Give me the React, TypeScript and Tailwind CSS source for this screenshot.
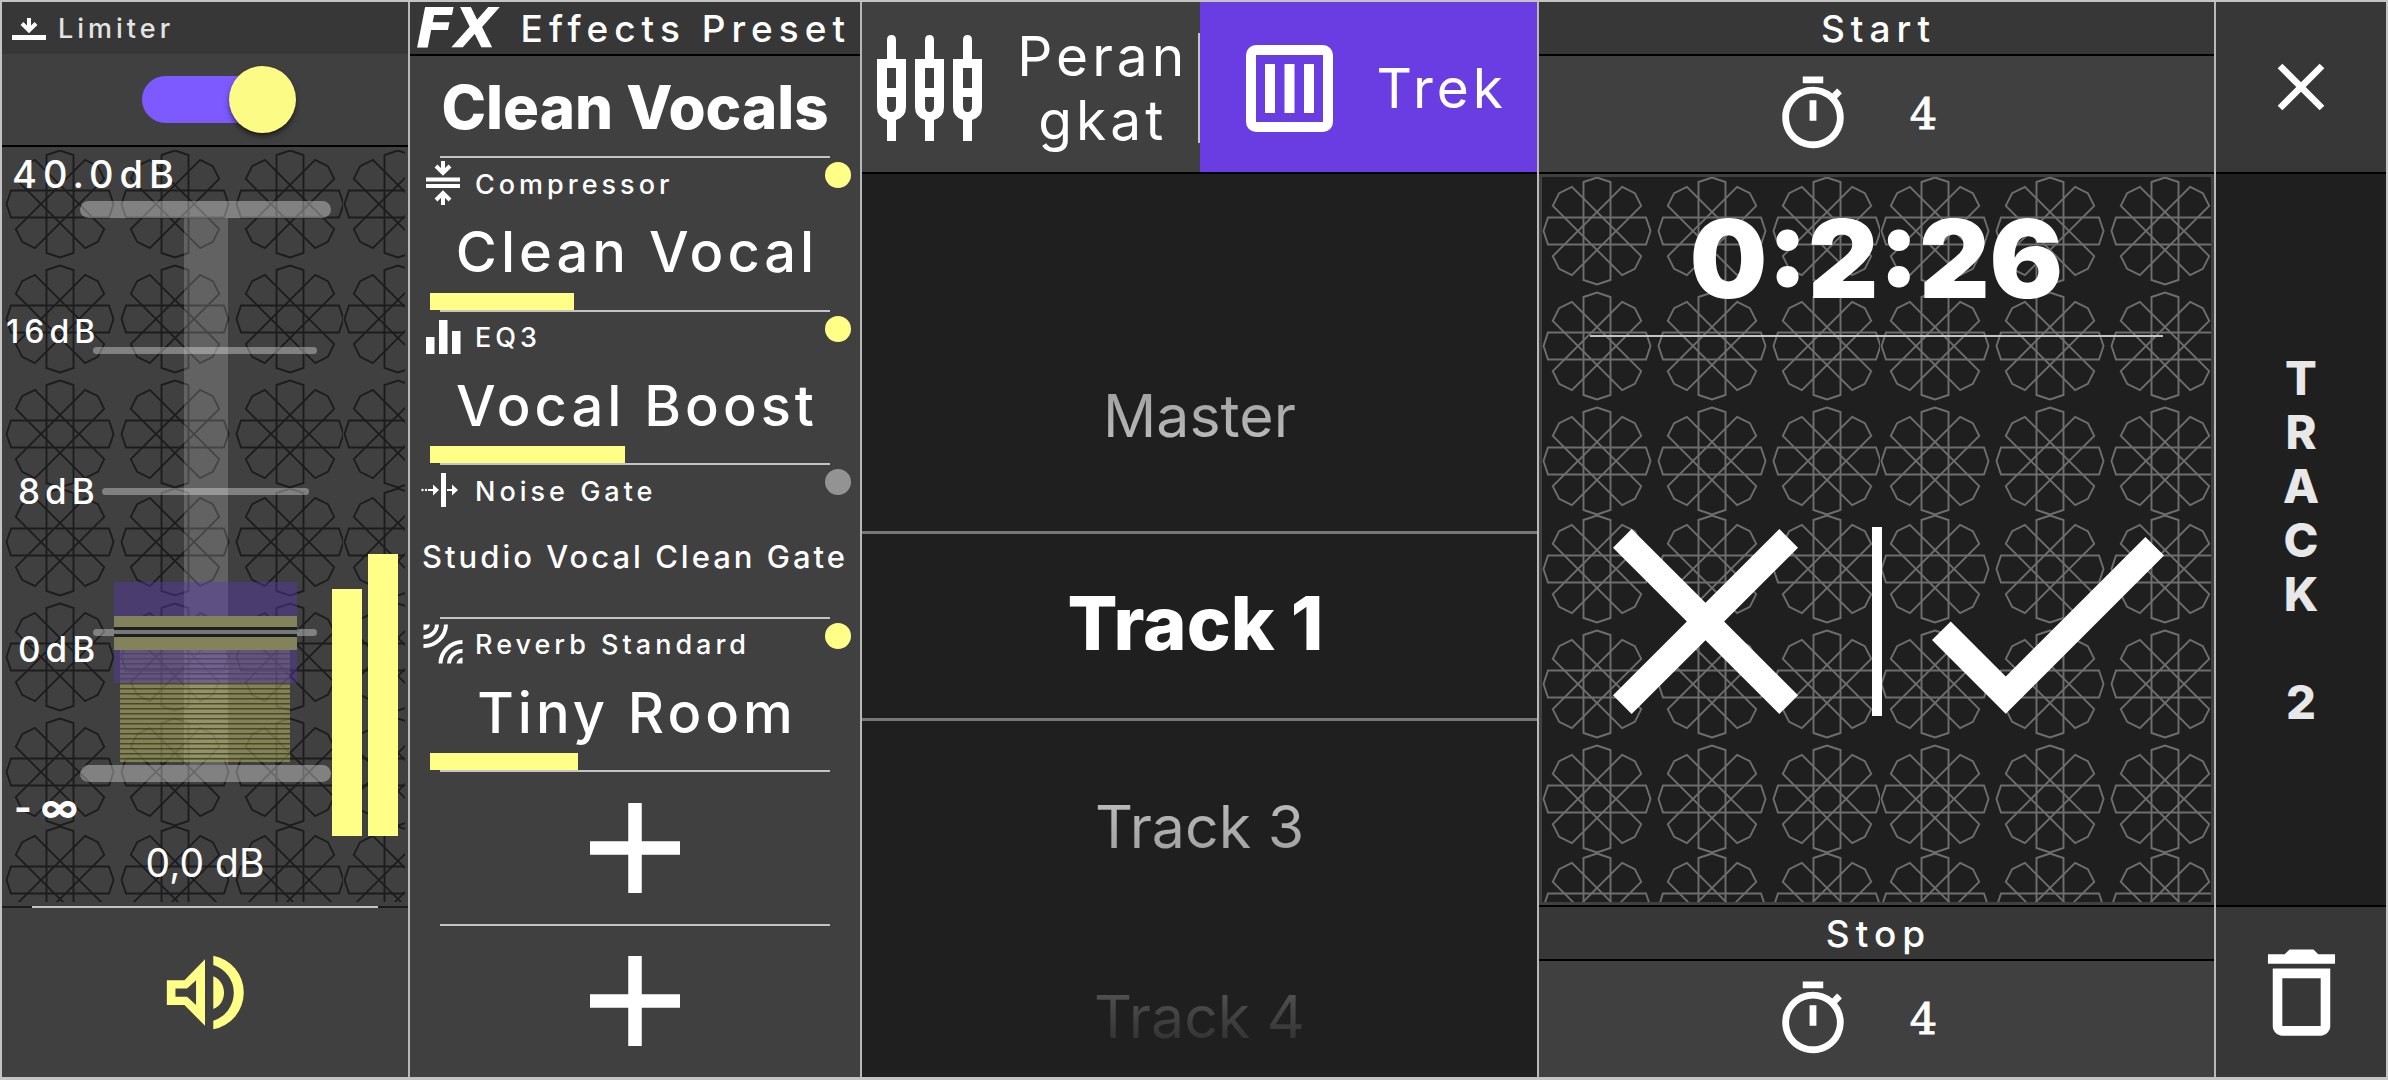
import { useState } from "react";
import type { ReactNode } from "react";
import { MdCheck, MdClose, MdDeleteOutline, MdOutlineTimer } from "react-icons/md";

const STAR_OFFSETS = [57, 172, 287];
const PETAL = "M-13.5 -49 L0 -53.5 L13.5 -49 V49 L0 53.5 L-13.5 49 Z";

/** Tiled backdrop of eight-petalled outline stars. */
function StarPattern({ id, color }: { id: string; color: string }) {
  return (
    <svg className="absolute inset-0 h-full w-full" aria-hidden="true">
      <defs>
        <g id={`${id}-star`} fill="none" stroke={color} strokeWidth="1.9">
          <path d={PETAL} />
          <path d={PETAL} transform="rotate(45)" />
          <path d={PETAL} transform="rotate(90)" />
          <path d={PETAL} transform="rotate(135)" />
        </g>
        <pattern id={id} width="338" height="338" patternUnits="userSpaceOnUse">
          {STAR_OFFSETS.map((x) =>
            STAR_OFFSETS.map((y) => (
              <use key={`${x}-${y}`} href={`#${id}-star`} x={x - 2} y={y - 3} />
            )),
          )}
        </pattern>
      </defs>
      <rect width="100%" height="100%" fill={`url(#${id})`} />
    </svg>
  );
}

function LimiterIcon() {
  return (
    <svg className="h-[22px] w-[34px]" viewBox="0 0 34 22" aria-hidden="true">
      <rect y="17" width="34" height="5" fill="#fff" />
      <path d="M17 0 V12 M10 5.5 L17 12.5 L24 5.5" stroke="#fff" strokeWidth="4" fill="none" />
    </svg>
  );
}

function CompressorIcon() {
  return (
    <svg className="h-[46px] w-[46px]" viewBox="0 0 46 46" aria-hidden="true">
      <path d="M6 19.5 H40 M6 26 H40" stroke="#fff" strokeWidth="4" />
      <path d="M23 1 V12 M16 6 L23 13 L30 6 M23 45 V34 M16 40 L23 33 L30 40" stroke="#fff" strokeWidth="4" fill="none" />
    </svg>
  );
}

function EqIcon() {
  return (
    <svg className="h-[46px] w-[46px]" viewBox="0 0 46 46" fill="#fff" aria-hidden="true">
      <rect x="6" y="23" width="8.500" height="17" />
      <rect x="19" y="6" width="8.500" height="34" />
      <rect x="32" y="17" width="8.500" height="23" />
    </svg>
  );
}

function GateIcon() {
  return (
    <svg className="h-[46px] w-[46px]" viewBox="0 0 46 46" fill="#fff" aria-hidden="true">
      <rect x="21" y="6" width="5" height="34" />
      <path d="M8 22 H13 V17.500 L19 23 L13 28.500 V24 H8 Z" />
      <path d="M27 22 H32 V17.500 L38 23 L32 28.500 V24 H27 Z" />
      <circle cx="2.500" cy="23" r="1.200" />
      <circle cx="6" cy="23" r="1.200" />
    </svg>
  );
}

function ReverbIcon() {
  return (
    <svg className="h-[46px] w-[46px]" viewBox="0 0 46 46" aria-hidden="true">
      <g fill="none" stroke="#fff" strokeWidth="4">
        <path d="M17 3.500 A13 13 0 0 1 3.500 16" />
        <path d="M26 3.500 A22 22 0 0 1 3.500 25" />
        <path d="M29 42.500 A13 13 0 0 1 42.500 30" />
        <path d="M20.500 42.500 A22 22 0 0 1 42.500 21" />
      </g>
      <path d="M3.500 3.500 H10 A6.500 6.500 0 0 1 3.500 9 Z M42.500 42.500 H36.500 A6.500 6.500 0 0 1 42.500 36.500 Z" fill="#fff" />
    </svg>
  );
}

function SpeakerIcon() {
  return (
    <svg className="h-[75px] w-[78px]" viewBox="500 704 234 226" fill="#ffff88" aria-hidden="true">
      <path fillRule="evenodd" d="M502 780 H555 L617 717 V917 L555 855 H502 Z M528 805 V830 H563 L590 855 V780 L563 805 Z" />
      <path d="M642 768 C685 785 685 850 642 867 Z" />
      <path d="M642 706 A113 113 0 0 1 642 928 V902 A88 88 0 0 0 642 734 Z" />
    </svg>
  );
}

function DevicesIcon() {
  return (
    <svg className="h-[106px] w-[108px] shrink-0" viewBox="0 0 108 106" aria-hidden="true">
      {[1, 39, 77].map((x) => (
        <g key={x} transform={`translate(${x} 0)`} fill="#fff">
          <path d="M10 24 V5 Q10 0 14.500 0 Q19 0 19 5 V24 Z" />
          <path
            fillRule="evenodd"
            d="M0 24 H29 V72 Q29 82 19 85 V106 H10 V85 Q0 82 0 72 Z M10 33 V53 H19 V33 Z M10 62 V71 Q10 77 14.500 77 Q19 77 19 71 V62 Z"
          />
        </g>
      ))}
    </svg>
  );
}

function TracksIcon() {
  return (
    <svg className="h-[87px] w-[87px] shrink-0" viewBox="0 0 87 87" aria-hidden="true">
      <rect x="5" y="5" width="77" height="77" rx="5" fill="none" stroke="#fff" strokeWidth="10" />
      <path d="M24 19 V68 M43.500 19 V68 M63 19 V68" stroke="#fff" strokeWidth="10" />
    </svg>
  );
}

function Line() {
  return <div className="h-[2px] shrink-0 bg-black" />;
}

function PanelHeader({ children }: { children: ReactNode }) {
  return <header className="flex h-[52px] shrink-0 items-center justify-center bg-[#373737] pt-[2px]">{children}</header>;
}

const SCALE = [
  { text: "40.0dB", className: "pl-[10px] text-[38px] tracking-[6px]" },
  { text: "16dB", className: "pl-1 text-[32px] tracking-[5px]" },
  { text: "8dB", className: "pl-4 text-[35px] tracking-[5px]" },
  { text: "0dB", className: "pl-4 text-[35px] tracking-[5px]" },
  { text: "- ∞", className: "pl-3 text-[38px] font-bold" },
];

/** Rails, ticks, handle and level meters of the gain fader. */
function Fader() {
  const stripes = Array.from({ length: 22 }, (_, i) => 506 + i * 5);
  return (
    <svg className="absolute inset-0 h-full w-full" viewBox="0 0 406 759" aria-hidden="true">
      <g fill="#fff">
        <rect x="182" y="71" width="44" height="547" fillOpacity="0.18" />
        <rect x="78" y="54" width="251" height="17" rx="8.500" fillOpacity="0.34" />
        <rect x="91" y="200" width="224" height="7" rx="3.500" fillOpacity="0.34" />
        <rect x="100" y="341" width="207" height="7" rx="3.500" fillOpacity="0.34" />
        <rect x="91" y="482" width="224" height="7" rx="3.500" fillOpacity="0.34" />
        <rect x="78" y="618" width="251" height="17" rx="8.500" fillOpacity="0.34" />
      </g>
      <rect x="112" y="435" width="183" height="101" fill="#5838b0" fillOpacity="0.42" />
      <rect x="118" y="503" width="170" height="33" fill="#a090a0" fillOpacity="0.3" />
      <rect x="118" y="536" width="170" height="79" fill="#c4c46c" fillOpacity="0.5" />
      <rect x="112" y="469" width="183" height="34" fill="#82835a" />
      <rect x="112" y="480" width="183" height="3" fill="#1f1f1f" />
      <rect x="112" y="483" width="183" height="4" fill="#777" />
      <rect x="112" y="487" width="183" height="3" fill="#1f1f1f" />
      {stripes.map((y) => (
        <rect
          key={y}
          x="118"
          y={y}
          width="170"
          height="1.500"
          fill={y < 536 ? "#4c3f60" : "#303018"}
          fillOpacity={y < 536 ? 0.8 : 0.7}
        />
      ))}
      <rect x="330" y="442" width="30" height="247" fill="#ffff88" />
      <rect x="366" y="407" width="30" height="282" fill="#ffff88" />
    </svg>
  );
}

function LimiterPanel() {
  const [on, setOn] = useState(true);
  return (
    <section className="flex min-w-0 flex-col bg-[#404040]">
      <header className="flex h-[52px] shrink-0 items-center gap-3 bg-[#373737] pt-[2px] pl-[10px]">
        <LimiterIcon />
        <h2 className="text-[27px] font-medium tracking-[4px] text-[#e4e4e4]">Limiter</h2>
      </header>
      <div className="flex h-[91px] shrink-0 items-center justify-center pl-7">
        <label className="relative flex h-[67px] w-[154px] cursor-pointer items-center">
          <input
            type="checkbox"
            role="switch"
            aria-label="Limiter"
            checked={on}
            onChange={() => setOn(!on)}
            className="peer sr-only"
          />
          <span className="h-[47px] w-[144px] rounded-full bg-[#757575] peer-checked:bg-[#7c5aff]" />
          <span className="absolute left-0 h-[67px] w-[67px] rounded-full bg-[#fbfb86] shadow-md shadow-black/50 peer-checked:left-auto peer-checked:right-0" />
        </label>
      </div>
      <Line />
      <div className="relative flex min-h-0 flex-1 flex-col">
        <div className="absolute inset-x-[3px] top-[3px] bottom-1 overflow-hidden">
          <StarPattern id="limiter-stars" color="#1c1c1c" />
        </div>
        <Fader />
        <div className="relative flex flex-1 flex-col justify-between pt-[7px] pb-1 font-medium whitespace-pre">
          {SCALE.map((s) => (
            <span key={s.text} className={`${s.className} leading-[40px]`}>
              {s.text}
            </span>
          ))}
        </div>
        <output className="relative flex h-[75px] shrink-0 items-center justify-center pb-[10px] text-[39px]">0,0 dB</output>
      </div>
      <div className="h-[2px] shrink-0 bg-[#1c1c1c] px-[30px]">
        <div className="h-full bg-[#c4c4c4]" />
      </div>
      <button type="button" aria-label="Mute" className="flex h-[169px] shrink-0 items-center justify-center">
        <SpeakerIcon />
      </button>
    </section>
  );
}

type Effect = { name: string; preset: string; level: number; on: boolean; small?: boolean; icon: ReactNode };

const EFFECTS: Effect[] = [
  { name: "Compressor", preset: "Clean Vocal", level: 37, on: true, icon: <CompressorIcon /> },
  { name: "EQ3", preset: "Vocal Boost", level: 50, on: true, icon: <EqIcon /> },
  { name: "Noise Gate", preset: "Studio Vocal Clean Gate", level: 0, on: false, small: true, icon: <GateIcon /> },
  { name: "Reverb Standard", preset: "Tiny Room", level: 38, on: true, icon: <ReverbIcon /> },
];

function EffectSlot({ effect }: { effect: Effect }) {
  const [on, setOn] = useState(effect.on);
  return (
    <div className="flex min-h-0 flex-1 flex-col">
      <div className="mx-[30px] h-[2px] shrink-0 bg-[#c4c4c4]" />
      <div className="flex h-[50px] shrink-0 items-center gap-[9px] pr-[9px] pl-[10px]">
        {effect.icon}
        <h3 className="flex-1 pt-1 text-[27px] font-medium tracking-[4px]">{effect.name}</h3>
        <button
          type="button"
          aria-label={`Toggle ${effect.name}`}
          aria-pressed={on}
          onClick={() => setOn(!on)}
          className={`mt-1 h-[26px] w-[26px] self-start rounded-full ${on ? "bg-[#ffff88]" : "bg-[#939393]"}`}
        />
      </div>
      <button
        type="button"
        className={`flex flex-1 items-center justify-center whitespace-nowrap font-medium ${
          effect.small ? "text-[31px] tracking-[3px]" : "pt-1 pl-1 text-[56px] leading-none tracking-[4px]"
        }`}
      >
        {effect.preset}
      </button>
      <div className="ml-5 h-[17px] w-[390px] shrink-0">
        <div className="h-full bg-[#ffff88]" style={{ width: `${effect.level}%` }} />
      </div>
    </div>
  );
}

function EmptySlot() {
  return (
    <div className="flex min-h-0 flex-1 flex-col">
      <div className="mx-[30px] h-[2px] shrink-0 bg-[#c4c4c4]" />
      <button type="button" aria-label="Add effect" className="flex flex-1 items-center justify-center">
        <svg className="h-[90px] w-[90px]" viewBox="0 0 90 90" aria-hidden="true">
          <path d="M45 0 V90 M0 45 H90" stroke="#fff" strokeWidth="13.500" />
        </svg>
      </button>
    </div>
  );
}

function EffectsPanel() {
  return (
    <section className="flex min-w-0 flex-col bg-[#404040]">
      <header className="flex h-[52px] shrink-0 items-center justify-between bg-[#373737] pr-[9px] pl-[6px]">
        <span className="font-['DejaVu_Sans'] text-[56px] leading-[52px] font-bold italic">FX</span>
        <h2 className="pt-[2px] text-[37px] leading-[50px] font-medium tracking-[6px] whitespace-nowrap">Effects Preset</h2>
      </header>
      <Line />
      <button type="button" className="h-[100px] shrink-0 pt-[2px] text-[60px] leading-none font-extrabold whitespace-nowrap">
        Clean Vocals
      </button>
      {EFFECTS.map((e) => (
        <EffectSlot key={e.name} effect={e} />
      ))}
      <EmptySlot />
      <EmptySlot />
    </section>
  );
}

function PickerPanel() {
  return (
    <section className="flex min-w-0 flex-col bg-[#1f1f1f]">
      <div role="tablist" className="grid h-[170px] shrink-0 grid-cols-2 text-[55px] leading-[64px] tracking-[4px]">
        <button
          type="button"
          role="tab"
          aria-selected="false"
          className="flex items-center bg-[#404040] pt-[2px] pl-[14px]"
        >
          <DevicesIcon />
          <span className="flex-1 pl-6 text-center">
            Peran
            <br />
            gkat
          </span>
          <span className="h-[110px] w-[2px] bg-[#c4c4c4]" />
        </button>
        <button
          type="button"
          role="tab"
          aria-selected="true"
          className="flex items-center justify-center gap-11 bg-[#6a3de2] pt-[2px] pl-4"
        >
          <TracksIcon />
          <span>Trek</span>
        </button>
      </div>
      <Line />
      <ul role="listbox" aria-label="Trek" className="grid min-h-0 flex-1 grid-rows-[minmax(0,1fr)_190px_minmax(0,1fr)] text-center text-[59px] leading-[72px]">
        <li role="option" aria-selected="false" className="flex items-end justify-center pb-[79px]">
          <span className="bg-linear-to-b from-[#9c9c9c] to-[#c0c0c0] bg-clip-text text-transparent">Master</span>
        </li>
        <li
          role="option"
          aria-selected="true"
          className="flex items-center justify-center border-y-3 border-[#777] pr-2 pb-[6px] text-[74px] font-extrabold"
        >
          Track 1
        </li>
        <li className="min-h-0 overflow-hidden">
          <ul role="group" className="flex flex-col items-center gap-[118px] pt-[70px]">
            <li role="option" aria-selected="false" className="bg-linear-to-b from-[#c0c0c0] to-[#9c9c9c] bg-clip-text text-transparent">
              Track 3
            </li>
            <li role="option" aria-selected="false" className="bg-linear-to-b from-[#585858] to-[#2c2c2c] bg-clip-text text-transparent">
              Track 4
            </li>
          </ul>
        </li>
      </ul>
    </section>
  );
}

function TimerRow({ label }: { label: string }) {
  return (
    <button type="button" aria-label={label} className="flex h-[116px] shrink-0 items-center justify-center gap-3 bg-[#404040]">
      <MdOutlineTimer className="h-[82px] w-[82px]" />
      <span className="w-[116px] text-center font-['DejaVu_Serif',serif] text-[43px] leading-none [-webkit-text-stroke:1px_white]">4</span>
    </button>
  );
}

function RecordPanel() {
  return (
    <section className="flex min-w-0 flex-col bg-[#404040]">
      <PanelHeader>
        <h2 className="pl-1 text-[37px] font-medium tracking-[6px]">Start</h2>
      </PanelHeader>
      <Line />
      <TimerRow label="Start timer" />
      <Line />
      <div className="relative flex min-h-0 flex-1 flex-col">
        <div className="absolute inset-x-[3px] top-[3px] bottom-[3px] overflow-hidden bg-[#1f1f1f]">
          <StarPattern id="record-stars" color="#6e6e6e" />
        </div>
        <div className="relative flex h-[161px] shrink-0 items-center justify-center pt-2 text-[109px] leading-none font-black">
          0:2:26
        </div>
        <div className="relative mx-[51px] h-[2px] shrink-0 bg-[#c4c4c4]" />
        <div className="relative flex flex-1 items-center">
          <button type="button" aria-label="Cancel" className="flex flex-1 justify-center">
            <MdClose viewBox="5 5 14 14" className="h-[185px] w-[185px]" />
          </button>
          <div className="h-[189px] w-[10px] bg-white" />
          <button type="button" aria-label="Confirm" className="flex flex-1 justify-center">
            <MdCheck viewBox="3.41 5 17.59 14" className="h-[185px] w-[232px]" />
          </button>
        </div>
      </div>
      <Line />
      <PanelHeader>
        <h2 className="pl-1 text-[37px] font-medium tracking-[6px]">Stop</h2>
      </PanelHeader>
      <Line />
      <TimerRow label="Stop timer" />
    </section>
  );
}

function TrackPanel() {
  return (
    <aside className="flex min-w-0 flex-col bg-[#1f1f1f]">
      <button type="button" aria-label="Close" className="flex h-[170px] shrink-0 items-center justify-center bg-[#373737]">
        <MdClose className="h-[80px] w-[80px]" />
      </button>
      <Line />
      <h1 className="flex flex-1 flex-col items-center justify-center text-[47px] leading-[54px] font-extrabold text-[#e8e8e8]">
        {"TRACK 2".split("").map((c, i) => (
          <span key={i} className="h-[54px]">
            {c}
          </span>
        ))}
      </h1>
      <Line />
      <button type="button" aria-label="Delete track" className="flex h-[170px] shrink-0 items-center justify-center bg-[#373737]">
        <MdDeleteOutline className="h-[115px] w-[115px]" />
      </button>
    </aside>
  );
}

export default function App() {
  return (
    <main className="grid h-screen grid-cols-[406fr_450fr_675fr_675fr_170fr] grid-rows-[minmax(0,1fr)] gap-x-[2px] overflow-hidden border-2 border-b-3 border-[#c4c4c4] bg-[#b8b8b8] font-[Inter,sans-serif] text-white">
      <LimiterPanel />
      <EffectsPanel />
      <PickerPanel />
      <RecordPanel />
      <TrackPanel />
    </main>
  );
}
